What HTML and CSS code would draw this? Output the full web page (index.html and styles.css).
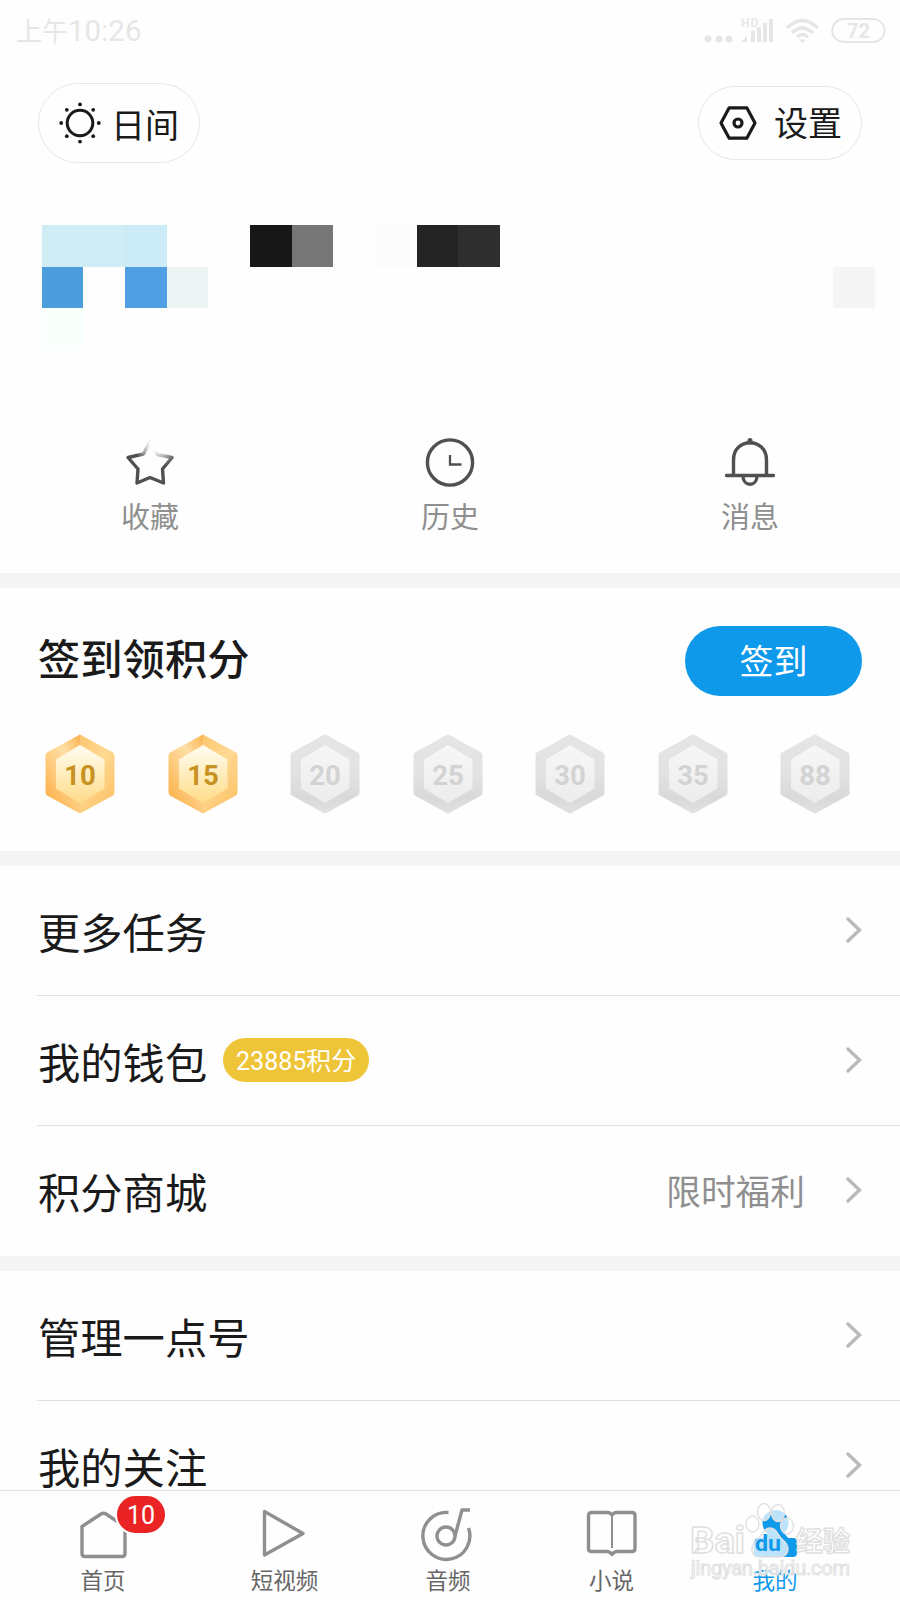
FILE: index.html
```html
<!doctype html>
<html lang="zh-CN">
	<head>
		<meta charset="utf-8">
		<title>我的</title>
		<meta name="viewport" content="width=device-width, initial-scale=1">
		<link rel="stylesheet" href="styles.css">
	</head>

	<body>
		<main>
			<div class="status">
				<div class="time"><span>上午</span>10:26</div>
				<svg width="184" height="30" viewBox="0 0 184 30" fill="#e6e6e6">
					<circle cx="4" cy="23" r="3.5"/><circle cx="15" cy="23" r="3.5"/><circle cx="25" cy="23" r="3.5"/>
					<text x="37" y="11" font-size="12" font-weight="500" letter-spacing="1">HD</text>
					<path d="M37 26l6-6v6zM47 15h4v11h-4zM53 11h4v15h-4zM59 7h4v19h-4zM65 3h4v23h-4z"/>
					<g fill="none" stroke="#e6e6e6" stroke-width="3.2">
						<path d="M83 12Q98 -3 114 12M88 17Q98 7 109 17M93 21Q98 16 104 21"/>
						<rect x="128.200" y="3" width="52.500" height="23" rx="11.500" stroke-width="2"/>
					</g>
					<path d="M95 23.500h7l-3.500 3.500z"/>
					<text x="154.500" y="22" font-size="20" font-weight="700" text-anchor="middle">72</text>
				</svg>
			</div>

			<div class="actions">
				<a class="pill day">
					<svg width="42" height="42" viewBox="-21 -21 42 42" fill="#1a1a1a">
						<circle r="12.800" fill="none" stroke="#1a1a1a" stroke-width="3"/>
						<circle cy="-18.600" r="1.900"/><circle cy="18.600" r="1.900"/><circle cx="-18.800" r="1.900"/><circle cx="18.800" r="1.900"/>
						<circle cx="-13.200" cy="-13.200" r="1.900"/><circle cx="13.200" cy="-13.200" r="1.900"/><circle cx="-13.200" cy="13.200" r="1.900"/><circle cx="13.200" cy="13.200" r="1.900"/>
					</svg>
					<span>日间</span>
				</a>
				<a class="pill settings">
					<svg width="42" height="42" viewBox="-21 -21 42 42" fill="none" stroke="#1a1a1a" stroke-width="3.200" stroke-linejoin="round">
						<path d="M-8.800 -15.200H8.800L17 0L8.800 15.200H-8.800L-17 0z"/>
						<circle r="4"/>
					</svg>
					<span>设置</span>
				</a>
			</div>

			<!-- censored avatar and nickname -->
			<div class="mosaic">
				<i class="a1"></i><i class="a2"></i><i class="a3"></i><i class="a4"></i><i class="a5"></i><i class="a6"></i>
				<i class="n1"></i><i class="n2"></i><i class="n3"></i><i class="n4"></i><i class="n5"></i>
				<i class="arrow"></i>
			</div>

			<nav class="shortcuts">
				<a>
					<svg width="60" height="60" viewBox="0 0 60 60" fill="none" stroke-width="3.400" stroke-linejoin="round">
						<defs>
							<radialGradient id="fade" gradientUnits="userSpaceOnUse" cx="37" cy="11" r="23">
								<stop offset=".3" stop-color="#505050" stop-opacity="0"/>
								<stop offset="1" stop-color="#505050"/>
							</radialGradient>
						</defs>
						<path stroke="url(#fade)" d="M30 8.500L37.500 21.500L52 24.500L42.500 36L43.500 50L30 44.500L17 50L18 36L8 24.500L23.500 21z"/>
					</svg>
					<span>收藏</span>
				</a>
				<a>
					<svg width="60" height="60" viewBox="0 0 60 60" fill="none" stroke="#505050" stroke-width="3.400">
						<circle cx="30" cy="29.500" r="22.600"/>
						<path d="M30 22v9.500h11.500" stroke-width="2.300"/>
					</svg>
					<span>历史</span>
				</a>
				<a>
					<svg width="60" height="60" viewBox="0 0 60 60" fill="none" stroke="#505050" stroke-width="3.400" stroke-linecap="round">
						<path d="M6.500 42.500H53.500M13.500 42V27C13.500 4 46.500 4 46.500 27V42M23 43C23 54 37 54 37 43"/>
						<path d="M30 7.500V9" stroke-width="5"/>
					</svg>
					<span>消息</span>
				</a>
			</nav>

			<section class="checkin">
				<header>
					<h2>签到领积分</h2>
					<button>签到</button>
				</header>
				<svg class="defs" width="0" height="0">
					<defs>
						<linearGradient id="gold" x2="0" y2="1"><stop stop-color="#fffdf3"/><stop offset="1" stop-color="#ffdc88"/></linearGradient>
						<linearGradient id="goldL" x1="1" x2=".3" y2="1"><stop stop-color="#fbb34b"/><stop offset=".35" stop-color="#ffdfa6"/><stop offset=".65" stop-color="#fecb7e"/><stop offset="1" stop-color="#fcb14a"/></linearGradient>
						<linearGradient id="goldR" x1="0" x2=".6" y2="1"><stop stop-color="#fdc66e"/><stop offset=".5" stop-color="#fed992"/><stop offset="1" stop-color="#fdc46c"/></linearGradient>
						<linearGradient id="grey" x2="0" y2="1"><stop stop-color="#f7f7f7"/><stop offset="1" stop-color="#ececec"/></linearGradient>
						<linearGradient id="greyB" x2="0" y2="1"><stop stop-color="#e5e5e5"/><stop offset=".5" stop-color="#e2e2e2"/><stop offset=".82" stop-color="#d9d9d9"/><stop offset="1" stop-color="#e0e0e0"/></linearGradient>
						<g id="coinOn">
							<path d="M35 0.500L2 18.500Q.500 19.500 .500 22V58Q.500 60.500 2 61.500L35 79.500z" fill="url(#goldL)"/>
							<path d="M35 0.500L68 18.500Q69.500 19.500 69.500 22V58Q69.500 60.500 68 61.500L35 79.500z" fill="url(#goldR)"/>
							<path d="M35 11L59.500 25.500V54.500L35 69L11 54.500V25.500z" fill="url(#gold)"/>
						</g>
						<g id="coinOff">
							<path d="M35 2.500L67.500 20.500V59.500L35 77.500L2.500 59.500V20.500z" fill="url(#greyB)" stroke="url(#greyB)" stroke-width="4" stroke-linejoin="round"/>
							<path d="M35 11L59.500 25.500V54.500L35 69L11 54.500V25.500z" fill="url(#grey)"/>
						</g>
					</defs>
				</svg>
				<div class="coins">
					<svg class="on" viewBox="0 0 70 80"><use href="#coinOn"/><text x="35" y="50.500">10</text></svg>
					<svg class="on" viewBox="0 0 70 80"><use href="#coinOn"/><text x="35" y="50.500">15</text></svg>
					<svg viewBox="0 0 70 80"><use href="#coinOff"/><text x="35" y="50.500">20</text></svg>
					<svg viewBox="0 0 70 80"><use href="#coinOff"/><text x="35" y="50.500">25</text></svg>
					<svg viewBox="0 0 70 80"><use href="#coinOff"/><text x="35" y="50.500">30</text></svg>
					<svg viewBox="0 0 70 80"><use href="#coinOff"/><text x="35" y="50.500">35</text></svg>
					<svg viewBox="0 0 70 80"><use href="#coinOff"/><text x="35" y="50.500">88</text></svg>
				</div>
			</section>

			<ul class="menu">
				<li><span>更多任务</span><svg class="chevron" viewBox="0 0 16 26"><path d="M2 2L13.500 13L2 24"/></svg></li>
				<li><span>我的钱包</span><b class="points">23885积分</b><svg class="chevron" viewBox="0 0 16 26"><path d="M2 2L13.500 13L2 24"/></svg></li>
				<li><span>积分商城</span><em>限时福利</em><svg class="chevron" viewBox="0 0 16 26"><path d="M2 2L13.500 13L2 24"/></svg></li>
			</ul>
			<ul class="menu">
				<li><span>管理一点号</span><svg class="chevron" viewBox="0 0 16 26"><path d="M2 2L13.500 13L2 24"/></svg></li>
				<li><span>我的关注</span><svg class="chevron" viewBox="0 0 16 26"><path d="M2 2L13.500 13L2 24"/></svg></li>
			</ul>
		</main>

		<nav class="tabs">
			<a>
				<svg viewBox="0 0 60 60"><path d="M12 51.500Q9 51.500 9 48.500V21.500L28 9Q30.500 7.500 33 9L52 21.500V48.500Q52 51.500 49 51.500z"/></svg>
				<span>首页</span>
				<b class="count">10</b>
			</a>
			<a class="video">
				<svg viewBox="0 0 60 60"><path d="M9.500 6.500L48 28.500L9.500 50z"/></svg>
				<span>短视频</span>
			</a>
			<a>
				<svg viewBox="0 0 60 60"><path d="M30.500 7.500A23.500 23.500 0 1 0 50.500 23M37 31L44 5H52"/><circle cx="28" cy="31" r="9"/></svg>
				<span>音频</span>
			</a>
			<a>
				<svg viewBox="0 0 60 60"><path d="M10 7.500H26Q28 7.500 30 10Q32 7.500 34 7.500H50Q53 7.500 53 10.500V43.500Q53 46.500 50 46.500H35Q32.500 46.500 30 49.500Q27.500 46.500 25 46.500H9.500Q6.500 46.500 6.500 43.500V10.500Q6.500 7.500 10 7.500z"/><path d="M30 10V43" stroke-width="2"/></svg>
				<span>小说</span>
			</a>
			<a class="active">
				<svg viewBox="0 0 60 60"><circle cx="30.500" cy="18" r="13"/><path d="M14 33H49Q52 33 52 39V48Q52 52 48 52H13Q9 52 9 48V39Q9 33 14 33zM22 29L38 27L44 34H18z"/></svg>
				<span>我的</span>
			</a>
			<svg class="watermark" width="170" height="90" viewBox="0 0 170 90">
				<text x="4" y="58" font-size="36" font-weight="700" textLength="55" lengthAdjust="spacingAndGlyphs">Bai</text>
				<ellipse cx="66.500" cy="29" rx="6.500" ry="8"/>
				<ellipse cx="78" cy="17" rx="6.500" ry="8.500"/>
				<ellipse cx="92" cy="18" rx="6.500" ry="8.500"/>
				<ellipse cx="101" cy="31" rx="6.500" ry="8"/>
				<path d="M84 33C91 33 91 40 97 45C105 52 103 62 93 62H74C65 62 63 52 71 45C77 40 77 33 84 33z"/>
				<text class="du" x="69" y="56" font-size="22" font-weight="700" textLength="26" lengthAdjust="spacingAndGlyphs">du</text>
				<text x="110" y="56" font-size="27" font-weight="700">经验</text>
				<text x="5" y="80" font-size="20" textLength="159" stroke-width="1">jingyan.baidu.com</text>
			</svg>
		</nav>
	</body>
</html>
```
FILE: styles.css
```css
* {
	box-sizing: border-box;
}

body {
	margin: 0;
	height: 1600px;
	overflow: hidden;
	display: flex;
	flex-direction: column;
	background: #fefefe;
	color: #1a1a1a;
	font-family: Roboto, "Noto Sans CJK SC", sans-serif;
}

main {
	flex: 1;
	min-height: 0;
	overflow: hidden;
}

svg {
	display: block;
	flex-shrink: 0;
}

.status {
	height: 62px;
	padding: 0 14px 0 16px;
	display: flex;
	justify-content: space-between;
	align-items: center;
	color: #e6e6e6;
}
.status > svg {
	margin-right: -14px;
	width: 196px;
	height: 30px;
	padding-right: 12px;
}
.time {
	font-size: 29.5px;
	line-height: 40px;
}
.time span {
	font-size: 26px;
}

.actions {
	height: 138px;
	padding: 20px 38px 0;
	display: flex;
	justify-content: space-between;
	align-items: flex-start;
}
.pill {
	display: flex;
	align-items: center;
	border: 1.5px solid #e6e6e6;
	border-radius: 41px;
	font-size: 34px;
	line-height: 48px;
}
.day {
	width: 162px;
	height: 80px;
	margin-top: 1px;
	padding-left: 20px;
}
.day span {
	margin: 5px 0 0 10px;
}
.settings {
	width: 164px;
	height: 74px;
	margin-top: 4px;
	padding-left: 18px;
}
.settings span {
	margin-left: 15px;
	margin-top: 1px;
}

.mosaic {
	margin: 25px 0 0 41.67px;
	display: grid;
	grid-template-columns: repeat(20, 41.67px);
	grid-template-rows: repeat(3, 41.67px);
}
.a1 { grid-area: 1 / 1 / 2 / 3; background: #d0edf6; }
.a2 { grid-area: 1 / 3; background: #cbebf6; }
.a3 { grid-area: 2 / 1; background: #4b9edb; }
.a4 { grid-area: 2 / 3; background: #509fe3; }
.a5 { grid-area: 2 / 4; background: #ecf5f4; }
.a6 { grid-area: 3 / 1; background: #f9fffb; }
.n1 { grid-area: 1 / 6; background: #171717; }
.n2 { grid-area: 1 / 7; background: #767676; }
.n3 { grid-area: 1 / 9; background: #fcfcfc; }
.n4 { grid-area: 1 / 10; background: #242424; }
.n5 { grid-area: 1 / 11; background: #2e2e2e; }
.arrow { grid-area: 2 / 20; background: #f5f5f5; }

.shortcuts {
	height: 223px;
	padding-top: 83px;
	display: grid;
	grid-template-columns: repeat(3, 1fr);
}
.shortcuts a {
	display: flex;
	flex-direction: column;
	align-items: center;
	font-size: 29px;
	line-height: 40px;
	color: #8f8f8f;
}
.shortcuts span {
	margin-top: 5px;
}

.checkin {
	height: 293px;
	border: solid #f5f5f5;
	border-width: 15px 0;
}
.checkin header {
	padding: 38px 38px 0 38px;
	display: flex;
	justify-content: space-between;
}
.checkin h2 {
	margin: 3px 0 0;
	font-size: 42.3px;
	line-height: 64px;
	font-weight: 500;
}
.checkin button {
	width: 177px;
	height: 70px;
	padding: 0;
	border: 0;
	border-radius: 35px;
	background: #0f99ea;
	color: #fff;
	font: 34px/72px Roboto, "Noto Sans CJK SC", sans-serif;
}
.coins {
	padding: 38px 50px 0 45px;
	display: flex;
	justify-content: space-between;
}
.coins svg {
	width: 70px;
	height: 80px;
}
.coins text {
	font-size: 27.5px;
	font-weight: 700;
	text-anchor: middle;
	fill: #d3d3d3;
}
.coins .on text {
	fill: #c79222;
}

.menu {
	margin: 0;
	padding: 0 0 0 37px;
	list-style: none;
}
.menu + .menu {
	border-top: 15px solid #f5f5f5;
}
.menu li {
	height: 130px;
	padding-right: 38px;
	display: flex;
	align-items: center;
	border-bottom: 1px solid #e2e2e2;
	font-size: 42.3px;
}
.menu li:last-child {
	border-bottom: 0;
}
.menu span {
	margin-left: 1px;
}
.menu em {
	margin: -2px 0 0 auto;
	font-size: 34.7px;
	font-style: normal;
	color: #8f8f8f;
}
.points {
	width: 146px;
	height: 44px;
	margin-left: 16px;
	border-radius: 22px;
	background: #eec438;
	color: #fff;
	font-size: 25px;
	font-weight: 400;
	line-height: 47px;
	text-align: center;
}
.chevron {
	width: 16px;
	height: 26px;
	margin: -1px 0 0 auto;
	fill: none;
	stroke: #bababa;
	stroke-width: 3.4;
	stroke-linecap: round;
}
.menu em + .chevron {
	margin-left: 41px;
}

.tabs {
	position: relative;
	height: 110px;
	padding: 14px 0 0 73px;
	display: flex;
	gap: 103.5px;
	border-top: 1px solid #e2e2e2;
	background: #fefefe;
}
.tabs a {
	position: relative;
	width: 60px;
	display: flex;
	flex-direction: column;
	align-items: center;
	font-size: 22.5px;
	line-height: 32px;
	color: #666;
	white-space: nowrap;
}
.tabs .video {
	margin-left: 18px;
}
.tabs a svg {
	width: 60px;
	height: 60px;
	fill: none;
	stroke: #8f8f8f;
	stroke-width: 3.4;
	stroke-linejoin: round;
}
.tabs .active {
	color: #0f99ea;
}
.tabs .active svg {
	fill: #0f99ea;
	stroke: none;
}
.count {
	position: absolute;
	left: 42px;
	top: -11px;
	width: 52px;
	height: 41px;
	border: 2px solid #fefefe;
	border-radius: 21px;
	background: #ea2424;
	color: #fff;
	font-size: 25px;
	font-weight: 400;
	line-height: 40px;
	text-align: center;
}

.watermark {
	position: absolute;
	left: 686px;
	top: 4px;
	fill: #fff;
	fill-opacity: .72;
	stroke: #e0e0e0;
	stroke-width: 1.4;
}
.watermark .du {
	fill: #0f99ea;
	fill-opacity: 1;
	stroke: none;
}
```
